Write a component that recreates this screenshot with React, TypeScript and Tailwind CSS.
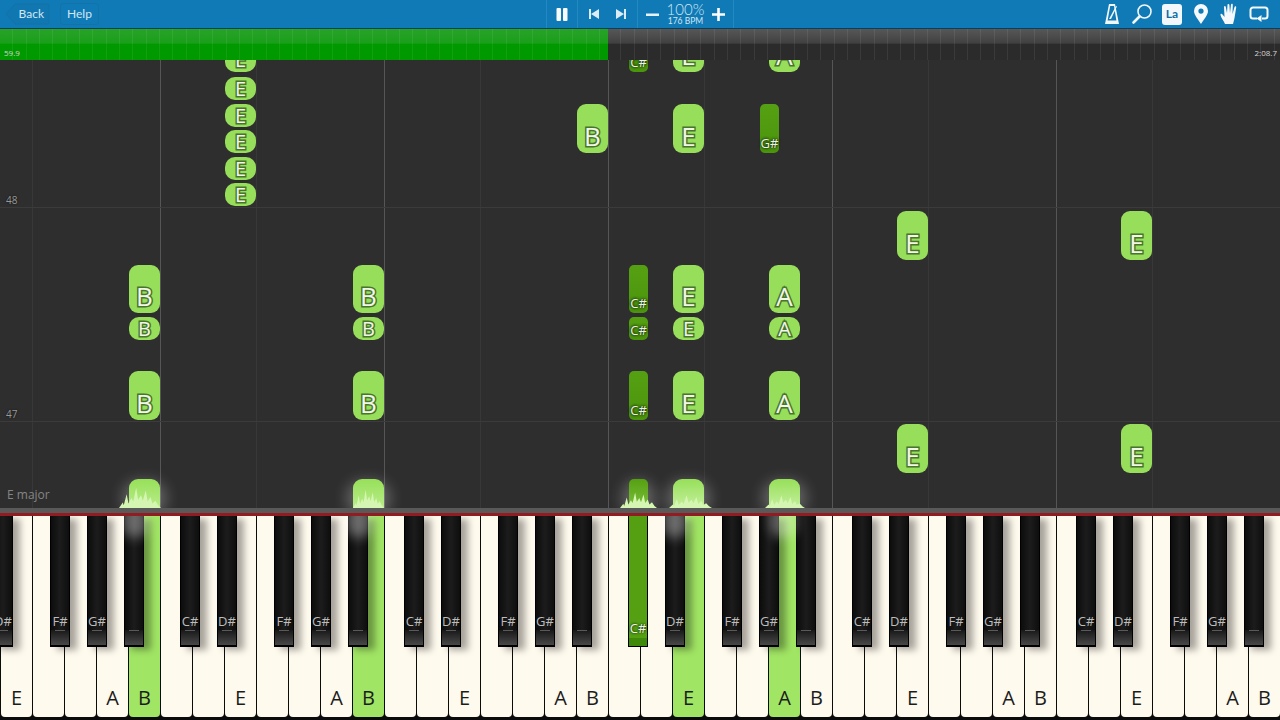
const font = { fontFamily: '"Open Sans", "Noto Sans", sans-serif' };

type Note = { x: number; y: number; h: number; label: string };

const whiteNames = ["E", "", "", "A", "B", "", ""];
const activeWhite = [128, 352, 672, 768];
const blackLabels = ["F#", "G#", "", "C#", "D#"];
const blackOffsets = [50, 87, 124, 180, 217];

const whiteKeys = Array.from({ length: 40 }, (_, i) => ({
  x: i * 32,
  label: whiteNames[i % 7],
}));

const blackKeys = [{ x: -7, label: "D#" }]
  .concat(
    [0, 224, 448, 672, 896, 1120].flatMap((base) =>
      blackOffsets.map((o, i) => ({ x: base + o, label: blackLabels[i] }))
    )
  )
  .filter((k) => k.x < 1280 && k.x !== 628);

const whiteNotes: Note[] = [
  { x: 225, y: -12, h: 24, label: "E" },
  { x: 225, y: 17, h: 23, label: "E" },
  { x: 225, y: 44, h: 23, label: "E" },
  { x: 225, y: 70, h: 23, label: "E" },
  { x: 225, y: 97, h: 23, label: "E" },
  { x: 225, y: 123, h: 23, label: "E" },
  { x: 673, y: -36, h: 48, label: "E" },
  { x: 769, y: -36, h: 48, label: "A" },
  { x: 577, y: 44, h: 49, label: "B" },
  { x: 673, y: 44, h: 49, label: "E" },
  { x: 897, y: 151, h: 49, label: "E" },
  { x: 1121, y: 151, h: 49, label: "E" },
  { x: 129, y: 205, h: 48, label: "B" },
  { x: 353, y: 205, h: 48, label: "B" },
  { x: 673, y: 205, h: 48, label: "E" },
  { x: 769, y: 205, h: 48, label: "A" },
  { x: 129, y: 257, h: 23, label: "B" },
  { x: 353, y: 257, h: 23, label: "B" },
  { x: 673, y: 257, h: 23, label: "E" },
  { x: 769, y: 257, h: 23, label: "A" },
  { x: 129, y: 311, h: 49, label: "B" },
  { x: 353, y: 311, h: 49, label: "B" },
  { x: 673, y: 311, h: 49, label: "E" },
  { x: 769, y: 311, h: 49, label: "A" },
  { x: 897, y: 364, h: 49, label: "E" },
  { x: 1121, y: 364, h: 49, label: "E" },
];

const blackNotes: Note[] = [
  { x: 629, y: -36, h: 48, label: "C#" },
  { x: 760, y: 44, h: 49, label: "G#" },
  { x: 629, y: 205, h: 48, label: "C#" },
  { x: 629, y: 257, h: 23, label: "C#" },
  { x: 629, y: 311, h: 49, label: "C#" },
];

const hitNotes = [
  { x: 129, w: 31, round: "rounded-t-[9px]", color: "bg-[linear-gradient(#97e05a,#b9ec8a)]", splash: -10, splashW: 42, tall: 22 },
  { x: 353, w: 31, round: "rounded-t-[9px]", color: "bg-[linear-gradient(#97e05a,#b9ec8a)]", splash: 0, splashW: 31, tall: 20 },
  { x: 629, w: 19, round: "rounded-t-[5px]", color: "bg-[linear-gradient(#55a012,#7dbf3c)]", splash: -9, splashW: 37, tall: 17 },
  { x: 673, w: 31, round: "rounded-t-[9px]", color: "bg-[linear-gradient(#97e05a,#c4ef9c)]", splash: -4, splashW: 43, tall: 14 },
  { x: 769, w: 31, round: "rounded-t-[9px]", color: "bg-[linear-gradient(#97e05a,#c4ef9c)]", splash: -4, splashW: 40, tall: 14 },
];

const dimLines = [32, 256, 480, 704, 928, 1152];
const brightLines = [160, 384, 608, 832, 1056];

function Splash() {
  return (
    <svg viewBox="0 0 44 24" preserveAspectRatio="none" className="block h-full w-full blur-[0.4px]">
      <polygon
        fill="#d4f6b2"
        points="0,24 4,18 5,21 8,9 10,19 13,13 15,17 18,2 20,15 23,10 25,16 28,5 30,17 33,12 35,19 38,16 41,21 44,24"
      />
    </svg>
  );
}

function Separator() {
  return <div className="h-[28px] w-px bg-[#2389c0]" />;
}

function HeaderBar() {
  return (
    <header className="flex h-[29px] shrink-0 items-center border-b border-[#0a3f5e] bg-[#0f7ab6] text-[#d3e7f3] [font-family:Lato,sans-serif]">
      <div className="flex w-[546px] items-center pl-[5px] text-[12px]">
        <div className="relative flex h-[22px] w-[45px] items-center justify-end pr-[6px]">
          <svg viewBox="0 0 45 22" className="absolute inset-0 h-full w-full" fill="none">
            <path d="M1 11 10 1h33a1 1 0 0 1 1 1v18a1 1 0 0 1-1 1H10Z" stroke="#1572a6" fill="#1077b1" />
          </svg>
          <span className="relative">Back</span>
        </div>
        <div className="ml-[10px] flex h-[22px] w-[39px] items-center justify-center rounded-[3px] border border-[#1572a6]">
          Help
        </div>
      </div>

      <Separator />
      <div className="flex w-[30px] justify-center">
        <svg width="12" height="13" viewBox="0 0 12 13" fill="#f7fbfd">
          <rect x="0.500" y="0" width="4.500" height="13" rx="1" />
          <rect x="7" y="0" width="4.500" height="13" rx="1" />
        </svg>
      </div>
      <Separator />
      <div className="flex w-[59px] justify-around px-[2px]">
        <svg width="12" height="12" viewBox="0 0 12 12" fill="#dcecf6">
          <path d="M1 1h2v10H1zM11 1v10L3 6z" />
        </svg>
        <svg width="12" height="12" viewBox="0 0 12 12" fill="#dcecf6">
          <path d="M11 1H9v10h2zM1 1v10l8-5z" />
        </svg>
      </div>
      <Separator />
      <div className="flex w-[95px] items-center justify-between px-[7px]">
        <svg width="15" height="15" viewBox="0 0 15 15" fill="#e6f1f8">
          <rect x="1" y="6.500" width="13" height="2.500" />
        </svg>
        <div className="flex flex-col items-center">
          <span className="text-[15px] leading-[13px] font-light">100%</span>
          <span className="text-[8.500px] leading-[10px]">176 BPM</span>
        </div>
        <svg width="15" height="15" viewBox="0 0 15 15" fill="#ffffff">
          <path d="M6.200 1h2.600v5.200H14v2.600H8.800V14H6.200V8.800H1V6.200h5.200z" />
        </svg>
      </div>
      <Separator />

      <div className="flex flex-1 items-center justify-end gap-[9px] pr-[11px]">
        <svg width="20" height="22" viewBox="0 0 20 22" fill="#f2f7fb">
          <path fillRule="evenodd" d="M7 1h6l4 20H3ZM8.200 3 5.600 17.500h8.800L12 3Z" />
          <path d="M4 18h12v3H4zM7 16 14 3l1 .6L9 16z" />
        </svg>
        <svg width="22" height="22" viewBox="0 0 22 22" fill="none" stroke="#f2f7fb">
          <circle cx="13.500" cy="8.500" r="6.500" strokeWidth="1.600" />
          <path d="M8.500 13.500 2.500 19.500" strokeWidth="2.600" strokeLinecap="round" />
        </svg>
        <div className="flex h-[21px] w-[20px] items-center justify-center rounded-[3px] bg-[#f2f7fb] text-[12px] font-bold text-[#0f6ea4]">
          La
        </div>
        <svg width="20" height="20" viewBox="0 0 20 20" fill="#f5f9fc">
          <path fillRule="evenodd" d="M10 0a7 7 0 0 1 7 7c0 4-4 8-7 13-3-5-7-9-7-13a7 7 0 0 1 7-7Zm0 4.500a2.600 2.600 0 1 0 0 5.200 2.600 2.600 0 0 0 0-5.200Z" />
        </svg>
        <svg width="20" height="22" viewBox="0 0 20 22" fill="#f5f9fc">
          <path d="M5 21c-1-3-4-6-4.500-9-.2-1.300 1.200-1.500 2-.5L4.500 14 4 4c0-1.300 1.700-1.300 1.800 0L7 10 7.500 2c0-1.300 1.800-1.300 1.900 0L10 10l1-8.500c.2-1.200 1.800-1 1.800.2L12.500 11l2-7c.3-1.200 1.900-.8 1.700.4L14.500 15c-.4 2-1 4-1.500 6Z" />
        </svg>
        <svg width="20" height="16" viewBox="0 0 20 16" fill="none" stroke="#f5f9fc" strokeWidth="2">
          <path d="M8 12.500H4a2.500 2.500 0 0 1-2.500-2.500V4A2.500 2.500 0 0 1 4 1.500h12A2.500 2.500 0 0 1 18.500 4v6a2.500 2.500 0 0 1-2.500 2.500h-3" />
          <path d="M12.500 9v7L7.500 12.500z" fill="#f5f9fc" stroke="none" />
        </svg>
      </div>
    </header>
  );
}

function Timeline() {
  return (
    <div className="flex h-[31px] shrink-0 items-end text-[8px] leading-[14px] text-[#d5d5d5]">
      <div className="h-full w-[608px] bg-[repeating-linear-gradient(90deg,transparent_0,transparent_12.33px,rgba(255,255,255,0.07)_12.33px,rgba(255,255,255,0.07)_13.33px),linear-gradient(#27a327,#1b9f1b_45%,#009900_50%,#009900)] pt-[17px] pl-[4px]">
        59.9
      </div>
      <div className="h-full flex-1 bg-[repeating-linear-gradient(90deg,transparent_0,transparent_12.33px,rgba(255,255,255,0.07)_12.33px,rgba(255,255,255,0.07)_13.33px),linear-gradient(#575757,#414141_45%,#2b2b2b_50%,#2b2b2b)] pt-[17px] pr-[3px] text-right">
        2:08.7
      </div>
    </div>
  );
}

function WhiteNote({ note }: { note: Note }) {
  const small = note.h < 30;
  return (
    <div
      className={`absolute flex w-[31px] justify-center bg-[#97de5a] text-[#f2f6e8] [-webkit-text-stroke:3px_#47752c] [paint-order:stroke_fill] ${
        small ? "items-center rounded-[10px] text-[20px]" : "items-end rounded-[9px] pb-[4px] text-[26px]"
      }`}
      style={{ left: note.x, top: note.y, height: note.h }}
    >
      <span className="leading-none [paint-order:stroke_fill]">{note.label}</span>
    </div>
  );
}

function BlackNote({ note }: { note: Note }) {
  return (
    <div
      className="absolute flex w-[19px] items-end justify-center rounded-[5px] bg-[linear-gradient(#55a012,#4b950d)] pb-[3px]"
      style={{ left: note.x, top: note.y, height: note.h }}
    >
      <span className="text-[13px] leading-none whitespace-nowrap text-[#eef2e6] [text-shadow:0_0_3px_#1f3a0c,0_0_3px_#1f3a0c,0_0_2px_#1f3a0c]">
        {note.label}
      </span>
    </div>
  );
}

function NoteRoll() {
  return (
    <div className="relative flex-1 overflow-hidden bg-[#2e2e2e]">
      {dimLines.map((x) => (
        <div key={x} className="absolute inset-y-0 w-px bg-[#383838]" style={{ left: x }} />
      ))}
      {brightLines.map((x) => (
        <div key={x} className="absolute inset-y-0 w-px bg-[#565656]" style={{ left: x }} />
      ))}
      {[147, 361].map((y) => (
        <div key={y} className="absolute inset-x-0 h-px bg-[#3b3b3b]" style={{ top: y }} />
      ))}
      <span className="absolute top-[133px] left-[6px] text-[10px] text-[#999999] [text-shadow:0_0_2px_#111]">48</span>
      <span className="absolute top-[347px] left-[6px] text-[10px] text-[#999999] [text-shadow:0_0_2px_#111]">47</span>
      <span className="absolute top-[426px] left-[7px] text-[12px] text-[#858585]">E major</span>

      {whiteNotes.map((n) => (
        <WhiteNote key={`${n.x}-${n.y}`} note={n} />
      ))}
      {blackNotes.map((n) => (
        <BlackNote key={`${n.x}-${n.y}`} note={n} />
      ))}

      {hitNotes.map((n) => (
        <div key={n.x} className="absolute bottom-0 h-[29px]" style={{ left: n.x, width: n.w }}>
          <div className="absolute -inset-x-[7px] -bottom-[8px] h-[36px] rounded-full bg-white/25 blur-[7px]" />
          <div className={`absolute inset-0 ${n.round} ${n.color}`} />
          <div className="absolute bottom-0" style={{ left: n.splash, width: n.splashW, height: n.tall }}>
            <Splash />
          </div>
        </div>
      ))}
    </div>
  );
}

function Keyboard() {
  return (
    <div className="shrink-0">
      <div className="h-[5px] bg-[#595959]" />
      <div className="h-[3px] bg-[#921c22]" />
      <div className="relative h-[204px] overflow-hidden bg-[#0b0b0b]">
        <div className="flex w-[1312px]">
          {whiteKeys.map((k) => {
            const active = activeWhite.includes(k.x);
            return (
              <div
                key={k.x}
                className={`ml-[1px] flex h-[201px] w-[31px] shrink-0 items-end justify-center rounded-b-[4px] pb-[5px] text-[20px] leading-[28px] text-[#1c1c1c] ${
                  active ? "bg-[#a1e564]" : "bg-[#fffaee]"
                }`}
              >
                {k.label}
              </div>
            );
          })}
        </div>
        {blackKeys.map((k) => (
          <div
            key={k.x}
            className="absolute top-0 flex h-[131px] w-[20px] flex-col items-center justify-end border-x border-b-2 border-black bg-[linear-gradient(90deg,#0c0c0c,#1c1c1c_50%,#0e0e0e)] shadow-[7px_3px_7px_rgba(0,0,0,0.35)]"
            style={{ left: k.x }}
          >
            <span className="mb-[2px] text-[13px] leading-none text-[#bdbdbd]">{k.label}</span>
            <div className="flex h-[15px] w-full justify-center bg-[linear-gradient(#181818,#484848)]">
              <div className="h-px w-[10px] bg-[#5a5a5a]" />
            </div>
          </div>
        ))}
        <div className="absolute top-0 left-[628px] flex h-[131px] w-[20px] flex-col items-center justify-end border border-t-0 border-black bg-[#55a012]">
          <span className="mb-[3px] text-[13px] leading-none text-[#eef2e6] [text-shadow:0_0_3px_#1f3a0c,0_0_2px_#1f3a0c]">C#</span>
          <div className="h-[8px] w-full bg-[#3f8a0a]" />
        </div>
        {[122, 346, 662, 770].map((x) => (
          <div key={x} className="absolute -top-[12px] h-[34px] w-[26px] rounded-full bg-white/35 blur-[6px]" style={{ left: x }} />
        ))}
      </div>
    </div>
  );
}

export default function App() {
  return (
    <div className="flex h-[720px] w-[1280px] flex-col overflow-hidden bg-[#2e2e2e]" style={font}>
      <HeaderBar />
      <Timeline />
      <NoteRoll />
      <Keyboard />
    </div>
  );
}
